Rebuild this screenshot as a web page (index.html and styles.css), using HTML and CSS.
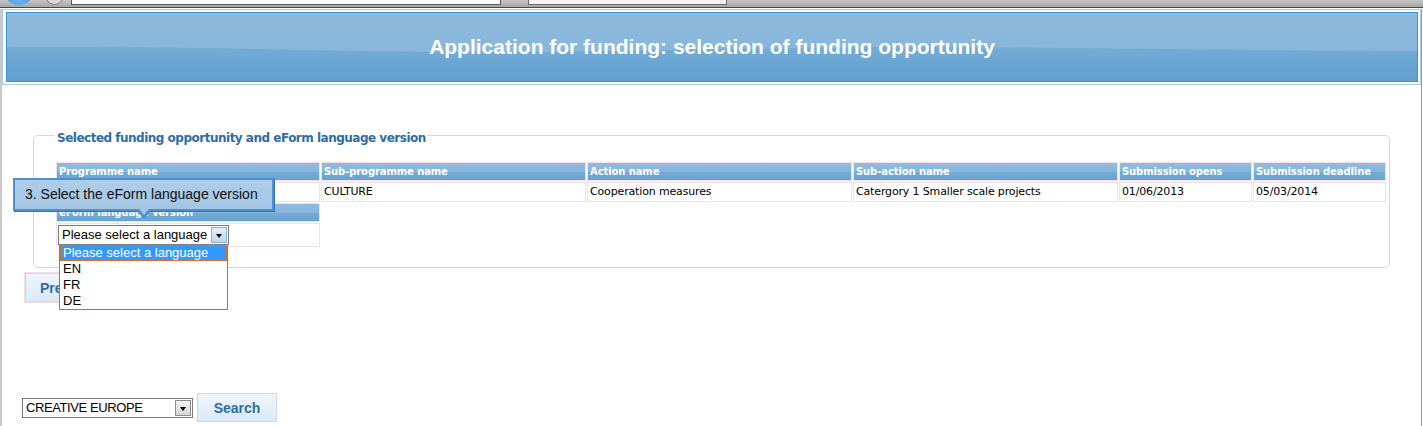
FILE: index.html
```html
<!DOCTYPE html>
<html lang="en">
<head>
  <meta charset="UTF-8">
  <title>Application for funding: selection of funding opportunity</title>
  <link rel="stylesheet" href="styles.css">
</head>
<body>
  <div class="chrome">
    <span class="chrome-orb"></span>
    <span class="chrome-nav"></span>
    <span class="chrome-address"></span>
    <span class="chrome-search"></span>
  </div>

  <div class="page">
    <div class="banner">
      <div class="banner-inner">
        <svg class="banner-wave" viewBox="0 0 1410 68" preserveAspectRatio="none">
          <defs>
            <linearGradient id="waveFill" x1="0" y1="0" x2="0" y2="1">
              <stop offset="0" stop-color="#74acd6"/>
              <stop offset="1" stop-color="#609fcf"/>
            </linearGradient>
          </defs>
          <path d="M0,34 C180,33 300,38 430,39 C620,40 800,33 950,34 C1120,35 1300,38 1410,38 L1410,68 L0,68 Z" fill="url(#waveFill)"/>
        </svg>
        <span class="banner-title">Application for funding: selection of funding opportunity</span>
      </div>
    </div>

    <div class="content">
      <fieldset class="selection">
        <legend>Selected funding opportunity and eForm language version</legend>
        <table class="grid">
          <tr>
            <th class="col-wide1">Programme name</th>
            <th class="col-wide">Sub-programme name</th>
            <th class="col-wide">Action name</th>
            <th class="col-wide">Sub-action name</th>
            <th class="col-date">Submission opens</th>
            <th class="col-date">Submission deadline</th>
          </tr>
          <tr>
            <td>CREATIVE EUROPE</td>
            <td>CULTURE</td>
            <td>Cooperation measures</td>
            <td>Catergory 1 Smaller scale projects</td>
            <td>01/06/2013</td>
            <td>05/03/2014</td>
          </tr>
          <tr>
            <th>eForm language version</th>
          </tr>
          <tr>
            <td class="lang-cell">
              <div class="select lang-select">
                <span class="select-text">Please select a language</span>
                <span class="select-arrow arrow-blue"></span>
                <ul class="lang-list">
                  <li class="active">Please select a language</li>
                  <li>EN</li>
                  <li>FR</li>
                  <li>DE</li>
                </ul>
              </div>
            </td>
          </tr>
        </table>
      </fieldset>

      <div class="actions">
        <button class="btn btn-prev">Previous</button>
      </div>

      <div class="search-bar">
        <div class="select programme-select">
          <span class="select-text">CREATIVE EUROPE</span>
          <span class="select-arrow arrow-grey"></span>
        </div>
        <button class="btn btn-search">Search</button>
      </div>

      <!-- guide bubble over the table -->
      <div class="tooltip">3. Select the eForm language version</div>
    </div>
  </div>
</body>
</html>
```

FILE: styles.css
```css
/* funding opportunity selection page */
* {
  box-sizing: border-box;
}

body {
  margin: 0;
  height: 426px;
  overflow: hidden;
  background-color: #fff;
  font-family: "Liberation Sans", Arial, sans-serif;
  font-size: 13px;
  color: #000;
}

/* browser toolbar remnant at the very top */
.chrome {
  display: flex;
  align-items: flex-start;
  height: 8px;
  overflow: hidden;
  background: linear-gradient(#c6c6c6, #a6a6a6);
  border-bottom: 1px solid #4a4a4a;
}

.chrome-orb {
  width: 32px;
  height: 32px;
  margin: -27px 0 0 3px;
  border-radius: 50%;
  background: radial-gradient(circle at 50% 80%, #6cb4ee, #2f7fcf);
}

.chrome-nav {
  width: 19px;
  height: 19px;
  margin: -14px 0 0 10px;
  border-radius: 50%;
  border: 1px solid #7a7a7a;
  background: #d8d8d8;
}

.chrome-address {
  width: 430px;
  height: 5px;
  margin-left: 7px;
  background: #fff;
  border: 1px solid #5a5a5a;
  border-top: none;
}

.chrome-search {
  width: 199px;
  height: 5px;
  margin-left: 27px;
  background: #f4f4f4;
  border: 1px solid #6a6a6a;
  border-top: none;
}

.page {
  height: 418px;
  border-left: 2px solid #c9c9c9;
  border-right: 1px solid #9a9a9a;
  margin-right: 1px;
}

/* title banner */
.banner {
  margin-top: 1px;
  padding: 2px 2px 2px 3px;
  border: 1px solid #a7cdea;
}

.banner-inner {
  position: relative;
  display: flex;
  align-items: center;
  justify-content: center;
  height: 70px;
  border: 1px solid #3b92dc;
  background: linear-gradient(#8dbadd, #85b4d9);
  overflow: hidden;
}

.banner-wave {
  position: absolute;
  left: 0;
  top: 0;
  width: 100%;
  height: 100%;
}

.banner-title {
  position: relative;
  color: #fff;
  font-size: 21px;
  font-weight: bold;
  padding-bottom: 1px;
}

.content {
  position: relative;
  padding-top: 39px;
}

/* selected opportunity block */
.selection {
  margin: 0 31px;
  padding: 15px 2px 19px 21px;
  border: 1px solid #cfd9e3;
  border-radius: 5px;
  min-width: 0;
}

.selection legend {
  margin-left: -1px;
  padding: 6px 1px 0 3px;
  line-height: 16px;
  font-family: "DejaVu Sans", Verdana, sans-serif;
  font-size: 12px;
  font-weight: bold;
  letter-spacing: -0.5px;
  color: #2d6ca6;
}

.grid {
  width: 1332px;
  table-layout: fixed;
  border-collapse: separate;
  border-spacing: 1px;
  font-family: "DejaVu Sans", Verdana, sans-serif;
  font-size: 11px;
}

.grid th,
.grid td {
  border: 1px solid #f6dde6;
  padding: 0 2px;
  text-align: left;
  white-space: nowrap;
  overflow: hidden;
}

.grid th {
  height: 19px;
  line-height: 16px;
  font-size: 10px;
  font-weight: bold;
  letter-spacing: -0.1px;
  color: #fff;
  background: linear-gradient(#8fbbde 0%, #88b6db 50%, #74abd6 56%, #68a3d1 100%);
}

.grid td {
  height: 20px;
  line-height: 18px;
  letter-spacing: -0.15px;
  color: #000;
}

.col-wide1 { width: 264px; }
.col-wide { width: 265px; }
.col-date { width: 133px; }

.grid td.lang-cell {
  height: 24px;
  padding: 1px;
  overflow: visible;
}

/* fake select boxes */
.select {
  position: relative;
  display: flex;
  align-items: center;
  height: 20px;
  padding-left: 3px;
  border: 1px solid #7a7a7a;
  background-color: #fff;
  font-family: "Liberation Sans", Arial, sans-serif;
  font-size: 13px;
  letter-spacing: 0;
  color: #000;
}

.select-text {
  flex: 1;
  line-height: 18px;
}

.select-arrow {
  position: relative;
  width: 16px;
  height: 16px;
  margin-right: 1px;
}

.select-arrow::after {
  content: "";
  position: absolute;
  left: 4px;
  top: 6px;
  border-top: 4px solid #000;
  border-left: 3.5px solid transparent;
  border-right: 3.5px solid transparent;
}

.arrow-blue {
  border: 1px solid #8fb0d2;
  background: linear-gradient(#e4f0fb, #bcd7f1);
}

.arrow-grey {
  border: 1px solid #8c8c8c;
  background: linear-gradient(#f2f2f2, #d6d6d6);
}

.lang-select {
  width: 171px;
}

.lang-list {
  position: absolute;
  left: 0;
  top: 18px;
  z-index: 3;
  width: 169px;
  margin: 0;
  padding: 0;
  list-style: none;
  border: 1px solid #7f7f7f;
  background-color: #fff;
}

.lang-list li {
  height: 16px;
  line-height: 16px;
  padding-left: 3px;
}

.lang-list li.active {
  background-color: #3399ff;
  color: #fff;
  outline: 1px dotted #d9792a;
  outline-offset: -1px;
}

/* buttons */
.btn {
  font-family: "Liberation Sans", Arial, sans-serif;
  font-size: 14px;
  font-weight: bold;
  color: #2f6ea5;
  background: linear-gradient(#eef5fc, #dbe9f7);
  cursor: pointer;
}

.actions {
  margin-top: 4px;
  padding-left: 22px;
}

.btn-prev {
  height: 31px;
  padding: 0 15px;
  border: 1px solid #f0dbe3;
  box-shadow: inset 0 0 0 1px #c9ddf0;
}

.search-bar {
  display: flex;
  align-items: center;
  gap: 4px;
  margin-top: 90px;
  padding-left: 20px;
}

.programme-select {
  width: 171px;
  letter-spacing: -0.4px;
}

.btn-search {
  width: 80px;
  height: 29px;
  padding: 0;
  border: 1px solid #c6dbee;
}

/* guide bubble */
.tooltip {
  position: absolute;
  left: 11px;
  top: 93px;
  z-index: 2;
  width: 261px;
  height: 33px;
  padding-left: 10px;
  line-height: 29px;
  font-size: 14px;
  color: #111;
  background: linear-gradient(#afcde8, #a3c5e3);
  border: 2px solid #4a92d2;
  box-shadow: 1px 1px 0 #3572ad;
}

.tooltip::before,
.tooltip::after {
  content: "";
  position: absolute;
  border-left: 8px solid transparent;
  border-right: 8px solid transparent;
}

.tooltip::before {
  left: 121px;
  bottom: -10px;
  border-top: 9px solid #4a92d2;
}

.tooltip::after {
  left: 124px;
  bottom: -6px;
  border-left-width: 5px;
  border-right-width: 5px;
  border-top: 6px solid #a4c6e3;
}
```
